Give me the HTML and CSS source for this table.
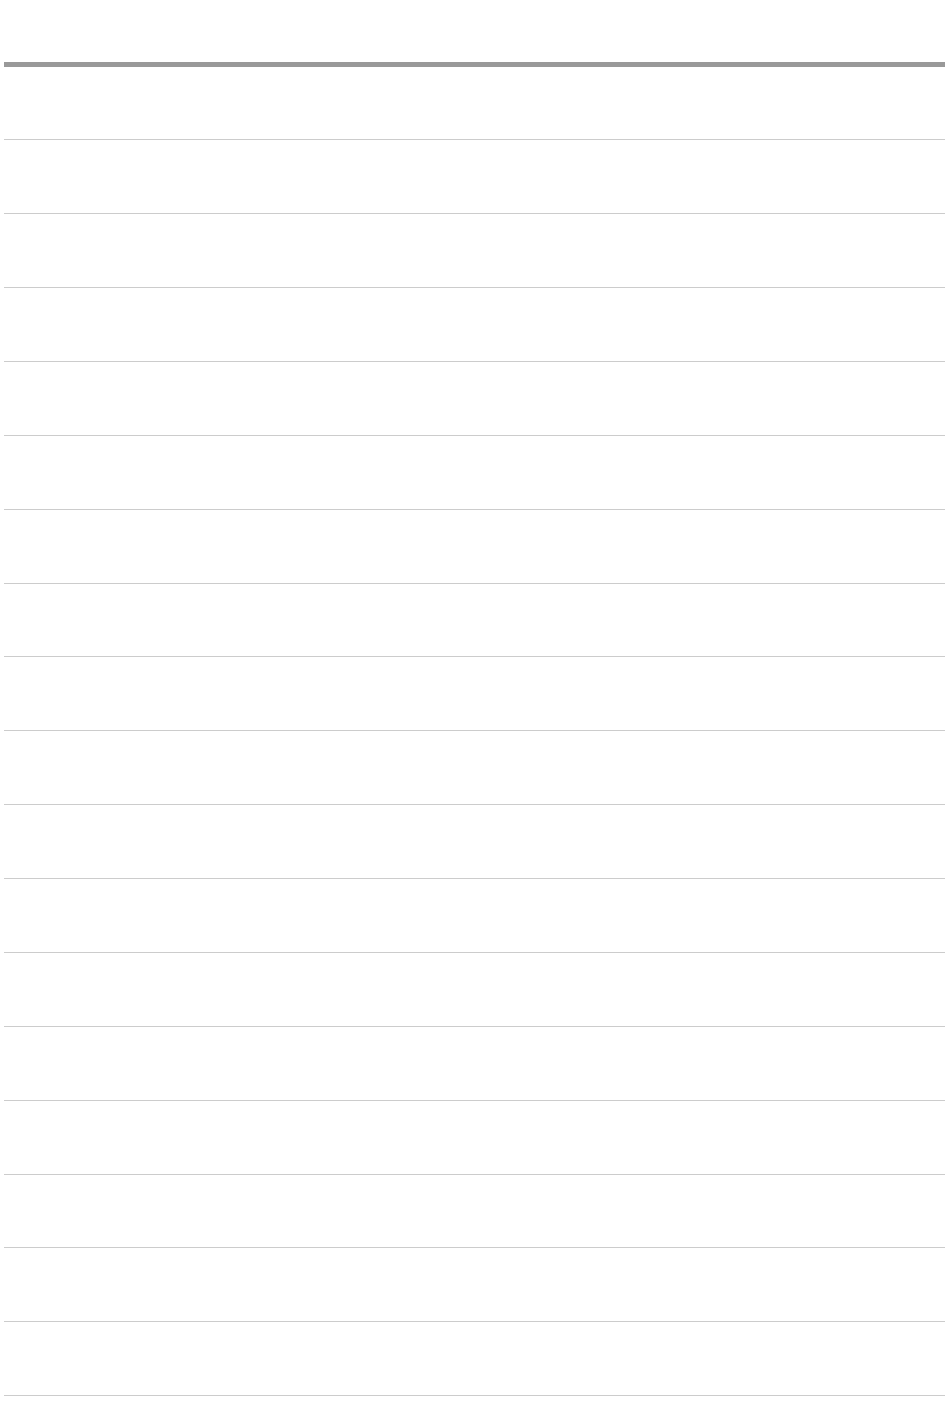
FILE: index.html
```html
<!DOCTYPE html>
<html lang="en">
<head>
    <meta charset="UTF-8">
    <meta name="viewport" content="width=device-width, initial-scale=1.0">
    <title>List</title>
    <link rel="stylesheet" href="styles.css">
</head>
<body>
    <div class="sheet">
        <div class="sheet-row"></div>
        <div class="sheet-row"></div>
        <div class="sheet-row"></div>
        <div class="sheet-row"></div>
        <div class="sheet-row"></div>
        <div class="sheet-row"></div>
        <div class="sheet-row"></div>
        <div class="sheet-row"></div>
        <div class="sheet-row"></div>
        <div class="sheet-row"></div>
        <div class="sheet-row"></div>
        <div class="sheet-row"></div>
        <div class="sheet-row"></div>
        <div class="sheet-row"></div>
        <div class="sheet-row"></div>
        <div class="sheet-row"></div>
        <div class="sheet-row"></div>
        <div class="sheet-row"></div>
    </div>
</body>
</html>
```

FILE: styles.css
```css
* {
    margin: 0;
    padding: 0;
    box-sizing: border-box;
}

body {
    font-family: "Liberation Sans", Arial, sans-serif;
    background: #fff;
    padding: 62px 5px 0 4px;
}

.sheet {
    border-top: 5px solid #999;
}

.sheet-row {
    height: 73.875px;
    border-bottom: 1px solid #ccc;
}

.sheet-row:first-child {
    height: 73.3px;
}
```
